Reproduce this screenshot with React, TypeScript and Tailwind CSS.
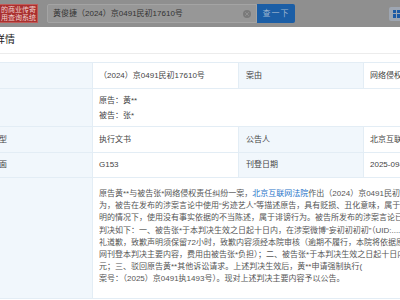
import { X } from "lucide-react";

const lines: React.ReactNode[] = [
  <>
    原告黄**与被告张*网络侵权责任纠纷一案，
    <span className="text-[#1f74c9]">北京互联网法院</span>
    作出（2024）京0491民初17610号民事判决，认
  </>,
  <>为，被告在发布的涉案言论中使用“劣迹艺人”等描述原告，具有贬损、丑化意味，属于侮辱行为；</>,
  <>明的情况下，使用没有事实依据的不当陈述，属于诽谤行为。被告所发布的涉案言论已经构成侵权。</>,
  <>判决如下：一、被告张*于本判决生效之日起十日内，在涉案微博“妄初初初初”（UID:......）发布</>,
  <>礼道歉，致歉声明须保留72小时，致歉内容须经本院审核（逾期不履行，本院将依据原告申请在</>,
  <>网刊登本判决主要内容，费用由被告张*负担）；二、被告张*于本判决生效之日起十日内，赔偿</>,
  <>元；三、驳回原告黄**其他诉讼请求。上述判决生效后，黄**申请强制执行(</>,
  <>案号：（2025）京0491执1493号）。现对上述判决主要内容予以公告。</>,
];

export default function App() {
  const label = "bg-[#f1f7fc] border border-[#e3edf5] pl-[7px] text-[#444] whitespace-nowrap";
  const value = "border border-[#e3edf5] pl-[6px] text-[#444] whitespace-nowrap";

  return (
    <div className="w-[400px] h-[300px] overflow-hidden bg-white text-[8px] leading-[12px] font-['Liberation_Sans','Noto_Sans_CJK_SC',sans-serif]">
      {/* top search bar (dimmed) */}
      <div className="flex items-center h-[27px] bg-[#8f8f8f]">
        <div className="flex flex-col items-end justify-center w-[38px] h-[19px] pr-[1px] overflow-hidden bg-[#a9302f] border border-[#c15a58] border-l-0 text-[7px] leading-[8px] text-[#f0d2d0] whitespace-nowrap">
          <span>的商业传寄</span>
          <span>用查询系统</span>
        </div>
        <div className="ml-[9px] flex items-center w-[210px] h-[19px] rounded-l-[2px] bg-[#979797] border border-[#a4a4a4] pl-[5px] pr-[5px] text-[#333]">
          <span className="flex-1 whitespace-nowrap">黄俊捷（2024）京0491民初17610号</span>
          <span className="flex items-center justify-center w-[8px] h-[8px] rounded-full bg-[#7a7a7a]">
            <X size={6} strokeWidth={3} color="#9a9a9a" />
          </span>
        </div>
        <div className="flex items-center justify-center w-[38px] h-[19px] rounded-r-[2px] bg-[#1b5ea6] text-[#9fb5cf] tracking-[1px]">
          查一下
        </div>
        <div className="ml-auto mr-[-4px] flex items-center justify-center w-[15px] h-[14px] rounded-[2px] bg-[#9ea6b2]">
          <div className="grid grid-cols-2 gap-[1px] w-[8px] h-[8px]">
            <span className="bg-[#1c5aa5]" />
            <span className="bg-[#1c5aa5]" />
            <span className="bg-[#1c5aa5]" />
            <span className="bg-[#1c5aa5]" />
          </div>
        </div>
      </div>

      {/* page content, scrolled left */}
      <div className="ml-[-33px] w-[560px]">
        <div className="flex items-center h-[27px] border-b border-[#ececec] pl-[8px] text-[10px] text-[#222]">
          公告详情
        </div>

        <table className="mt-[8px] w-[542px] border-collapse table-fixed">
          <colgroup>
            <col className="w-[125px]" />
            <col className="w-[146px]" />
            <col className="w-[125px]" />
            <col className="w-[146px]" />
          </colgroup>
          <tbody>
            <tr className="h-[26px]">
              <td className={label}>案号</td>
              <td className={value + " text-[#3a8bd6]"}>（2024）京0491民初17610号</td>
              <td className={label}>案由</td>
              <td className={value}>网络侵权责任纠纷</td>
            </tr>
            <tr className="h-[38px]">
              <td className={label}>当事人</td>
              <td className={value + " leading-[15px]"} colSpan={3}>
                <div>原告：黄**</div>
                <div>被告：张*</div>
              </td>
            </tr>
            <tr className="h-[26px]">
              <td className={label}>公告类型</td>
              <td className={value}>执行文书</td>
              <td className={label}>公告人</td>
              <td className={value}>北京互联网法院</td>
            </tr>
            <tr className="h-[25px]">
              <td className={label}>刊登版面</td>
              <td className={value}>G153</td>
              <td className={label}>刊登日期</td>
              <td className={value}>2025-09-18</td>
            </tr>
            <tr>
              <td className={label}>内容</td>
              <td className={value + " pt-[10px] pb-[12px] text-[#555] leading-[12.2px]"} colSpan={3}>
                <div className="overflow-hidden">
                  {lines.map((line, i) => (
                    <div key={i} className="whitespace-nowrap">
                      {line}
                    </div>
                  ))}
                </div>
              </td>
            </tr>
          </tbody>
        </table>
      </div>
    </div>
  );
}
